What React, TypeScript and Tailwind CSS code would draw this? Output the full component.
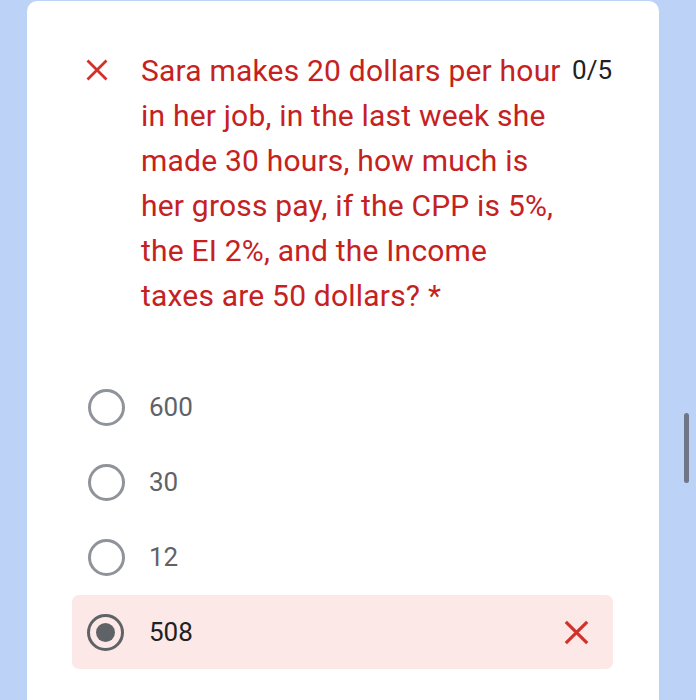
import React from "react";

const XIcon = ({ size = 24, className = "" }: { size?: number; className?: string }) => (
  <svg width={size} height={size} viewBox="0 0 24 24" className={className}>
    <path d="M2.5 2.5 L21.5 21.5 M21.5 2.5 L2.5 21.5" stroke="currentColor" strokeWidth="2.8" fill="none" />
  </svg>
);

const Radio = ({ checked }: { checked?: boolean }) => (
  <div
    className={
      "w-[37px] h-[37px] rounded-full border-[3.5px] flex items-center justify-center shrink-0 " +
      (checked ? "border-[#5f6368]" : "border-[#909399]")
    }
  >
    {checked && <div className="w-[19px] h-[19px] rounded-full bg-[#5f6368]" />}
  </div>
);

export default function App() {
  const options = ["600", "30", "12"];
  return (
    <div
      className="relative h-[700px] w-[696px] overflow-hidden bg-[#bcd3f7]"
      style={{ fontFamily: "Roboto, 'Noto Sans', sans-serif" }}
    >
      <div className="ml-[27px] mt-[1px] w-[632px] h-[720px] bg-white rounded-t-[10px]">
        <div className="flex pt-[47px] pl-[58px]">
          <div className="w-[56px] shrink-0 pt-[10px] text-[#d0312b]">
            <XIcon size={24} />
          </div>
          <div className="w-[471px] text-[30px] leading-[45px] tracking-[0.2px] text-[#c5221f]">
            <span className="float-right text-[26px] tracking-normal text-[#202124]">0/5</span>
            Sara makes 20 dollars per hour
            <br />
            in her job, in the last week she
            <br />
            made 30 hours, how much is
            <br />
            her gross pay, if the CPP is 5%,
            <br />
            the EI 2%, and the Income
            <br />
            taxes are 50 dollars? *
          </div>
        </div>

        <div className="ml-[45px] w-[541px] mt-[52px] flex flex-col">
          {options.map((o) => (
            <div key={o} className="h-[75px] flex items-center pl-[16px]">
              <Radio />
              <span className="ml-[24px] text-[26px] text-[#5f6368]">{o}</span>
            </div>
          ))}
          <div className="h-[74px] flex items-center pl-[15px] pr-[23px] bg-[#fce8e6] rounded-[7px]">
            <Radio checked />
            <span className="ml-[25px] text-[26px] text-[#202124]">508</span>
            <div className="ml-auto text-[#d0312b]">
              <XIcon size={27} />
            </div>
          </div>
        </div>
      </div>
      <div className="absolute left-[684px] top-[413px] w-[5px] h-[70px] rounded-full bg-[#6f7787]" />
    </div>
  );
}
